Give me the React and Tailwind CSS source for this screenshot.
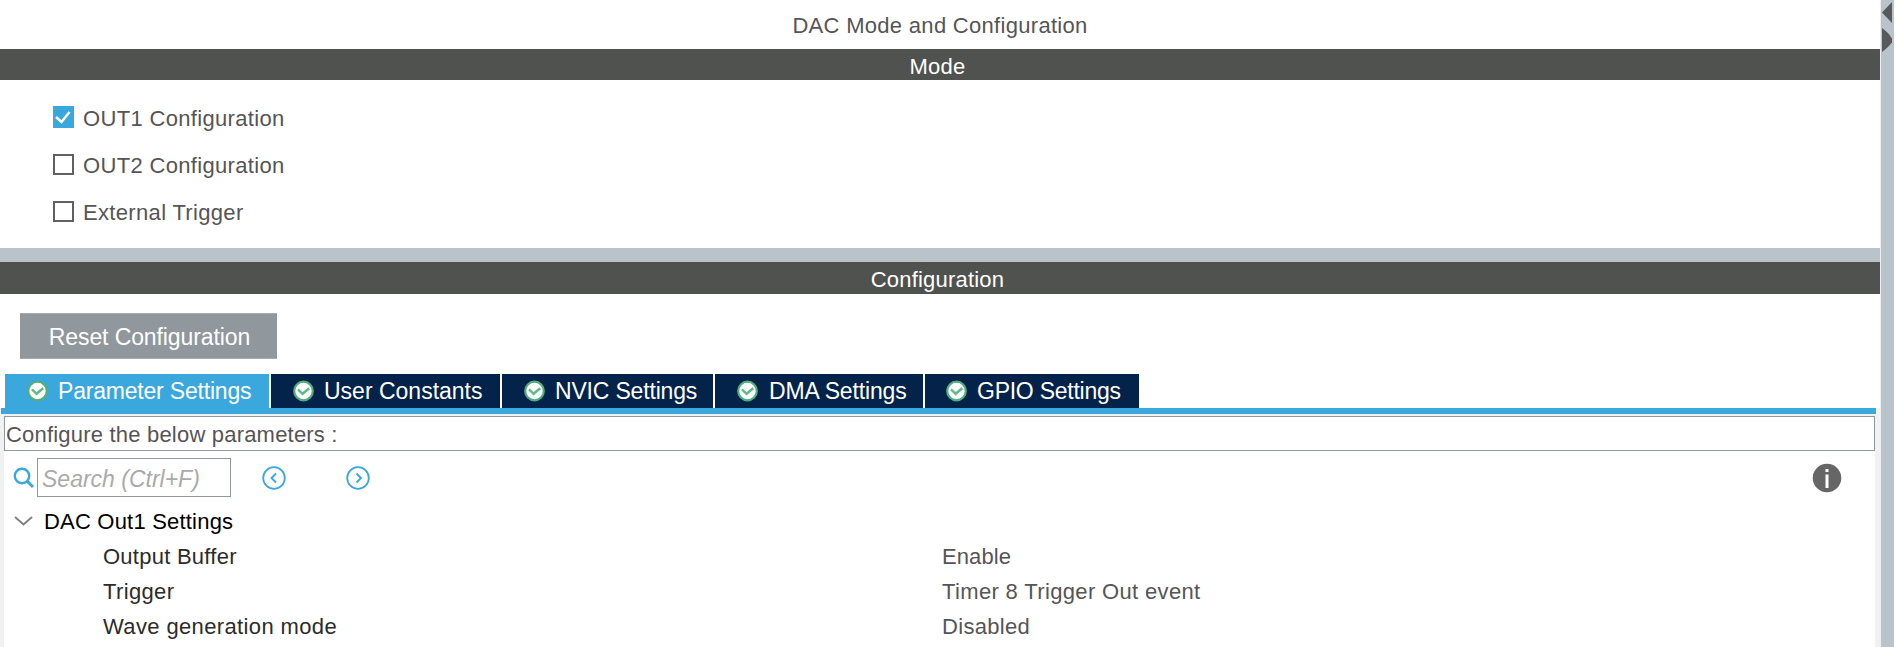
const tabs = [
  { label: 'Parameter Settings', size: 'w-[264px] pl-[22px]', text: 'ml-[10px] tracking-[-0.2px]', active: true },
  { label: 'User Constants', size: 'w-[229px] pl-[22px]', text: 'ml-[10px]' },
  { label: 'NVIC Settings', size: 'w-[211px] pl-[22px]', text: 'ml-[10px] tracking-[-0.18px]' },
  { label: 'DMA Settings', size: 'w-[208px] pl-[22px]', text: 'ml-[11px] tracking-[-0.15px]' },
  { label: 'GPIO Settings', size: 'w-[214px] pl-[21px]', text: 'ml-[10px] tracking-[-0.25px]' },
];

const rows = [
  { name: 'Output Buffer', value: 'Enable', nameClass: 'tracking-[0.25px]', valueClass: 'tracking-[0.1px]' },
  { name: 'Trigger', value: 'Timer 8 Trigger Out event', nameClass: 'tracking-[0.35px]', valueClass: 'tracking-[0.35px]' },
  { name: 'Wave generation mode', value: 'Disabled', nameClass: 'tracking-[0.37px]', valueClass: 'tracking-[0.3px]' },
];

function StatusIcon() {
  return (
    <svg className="shrink-0" width="21" height="22" viewBox="0 0 21 22">
      <circle cx="10.5" cy="11" r="9.3" fill="#fff" stroke="#4fb07a" strokeWidth="2.2" />
      <path d="M5 9.400l4.600 4.400 6.600-5.600" fill="none" stroke="#63b98a" strokeWidth="2.500" />
    </svg>
  );
}

function Option({ label, checked, className }) {
  return (
    <label className={`flex items-center ${className}`}>
      {checked ? (
        <span className="flex h-[22px] w-[21px] items-center justify-center bg-[#3aa8dc]">
          <svg width="21" height="22" viewBox="0 0 21 22">
            <path d="M3 11l5.500 5L16.500 6" fill="none" stroke="#fff" strokeWidth="2.500" />
          </svg>
        </span>
      ) : (
        <span className="h-[21px] w-[21px] border-2 border-[#606060] bg-white" />
      )}
      <span className="ml-[9px] pt-[3px] tracking-[0.33px]">{label}</span>
    </label>
  );
}

function StepIcon({ d }) {
  return (
    <svg className="shrink-0" width="26" height="26" viewBox="0 0 26 26" fill="none" stroke="#3aa8dc">
      <circle cx="13" cy="13" r="10.8" strokeWidth="1.8" />
      <path d={d} strokeWidth="1.9" />
    </svg>
  );
}

export default function App() {
  return (
    <div className="flex h-[647px] w-[1904px] overflow-hidden bg-white font-['Liberation_Sans',Arial,sans-serif] text-[22px] leading-[26px] whitespace-nowrap text-[#555557]">
      <main className="flex w-[1880px] flex-col">
        <h1 className="flex h-[49px] items-center justify-center pt-[2px] tracking-[0.3px]">DAC Mode and Configuration</h1>
        <h2 className="flex h-[31px] items-center justify-center bg-[#505250] pt-[4px] pr-[5px] tracking-[0.2px] text-white">Mode</h2>
        <section className="h-[168px] pt-[23px] pl-[53px]">
          <Option label="OUT1 Configuration" checked className="h-[28px]" />
          <Option label="OUT2 Configuration" className="mt-[20px] h-[27px]" />
          <Option label="External Trigger" className="mt-[20px] h-[27px]" />
        </section>
        <div className="h-[14px] bg-[#b8c3ca]" />
        <h2 className="flex h-[32px] items-center justify-center bg-[#505250] pt-[4px] pr-[5px] tracking-[0.2px] text-white">Configuration</h2>
        <div className="h-[80px] pt-[19px] pl-[20px]">
          <button className="flex h-[46px] w-[257px] items-center justify-center border-y border-[#a5abb0] bg-[#90979d] pt-[2px] pl-[2px] text-[23px] tracking-[-0.1px] text-white">
            Reset Configuration
          </button>
        </div>
        <nav className="flex h-[34px] gap-[2px] pl-[5px] text-[23px] text-white">
          {tabs.map((t) => (
            <div key={t.label} className={`flex items-center ${t.size} ${t.active ? 'bg-[#3aa8dc]' : 'bg-[#03234b]'}`}>
              <StatusIcon />
              <span className={t.text}>{t.label}</span>
            </div>
          ))}
        </nav>
        <div className="flex grow flex-col bg-[#f0f1f3]">
          <div className="ml-px h-[6px] w-[1875px] bg-[#3aa8dc]" />
          <div className="mt-[2px] ml-[4px] flex w-[1871px] grow flex-col bg-white">
            <p className="flex h-[35px] items-center border border-[#90979d] pt-[3px] pl-px tracking-[0.2px]">Configure the below parameters :</p>
            <div className="mt-[7px] flex h-[39px] items-center pl-[8px]">
              <svg className="shrink-0" width="23" height="23" viewBox="0 0 23 23" fill="none" stroke="#3aa8dc">
                <circle cx="10" cy="10" r="7.2" strokeWidth="2.400" />
                <path d="M15 15l6 6" strokeWidth="3" />
              </svg>
              <div className="ml-[2px] flex h-[39px] w-[194px] items-center border border-[#90979d] pt-[2px] pl-[4px] text-[23px] text-[#aaaaaa] italic">
                Search (Ctrl+F)
              </div>
              <div className="ml-[30px] flex gap-[58px]">
                <StepIcon d="M15 8.5l-4.5 4.5 4.5 4.5" />
                <StepIcon d="M11.5 8.5l4.5 4.5-4.5 4.5" />
              </div>
              <svg className="mr-[33px] ml-auto shrink-0" width="30" height="30" viewBox="0 0 30 30">
                <circle cx="15" cy="15" r="14.3" fill="#666" />
                <path d="M13.500 6h3v3h-3zM13.500 11.500h3v13.500h-3z" fill="#fff" />
              </svg>
            </div>
            <div className="mt-[7px] flex h-[35px] items-center pl-[10px] text-black">
              <svg width="19" height="12" viewBox="0 0 19 12" fill="none" stroke="#808080" strokeWidth="2">
                <path d="M1 1l8.500 7.500L18 1" />
              </svg>
              <span className="ml-[11px] tracking-[0.2px]">DAC Out1 Settings</span>
            </div>
            {rows.map((r) => (
              <div key={r.name} className="flex h-[35px] items-center pl-[99px]">
                <span className={`w-[839px] text-[#2c2c2c] ${r.nameClass}`}>{r.name}</span>
                <span className={r.valueClass}>{r.value}</span>
              </div>
            ))}
          </div>
        </div>
      </main>
      <aside className="h-[647px] w-[14px] border-l border-[#eceff1] bg-[#b8c3ca]">
        <svg width="13" height="54" viewBox="0 0 13 54" fill="#58595b">
          <path d="M11 2v21L1 12.500zM1 28l6 5 4 5.500v4L7 47l-6 5z" />
        </svg>
      </aside>
    </div>
  );
}
